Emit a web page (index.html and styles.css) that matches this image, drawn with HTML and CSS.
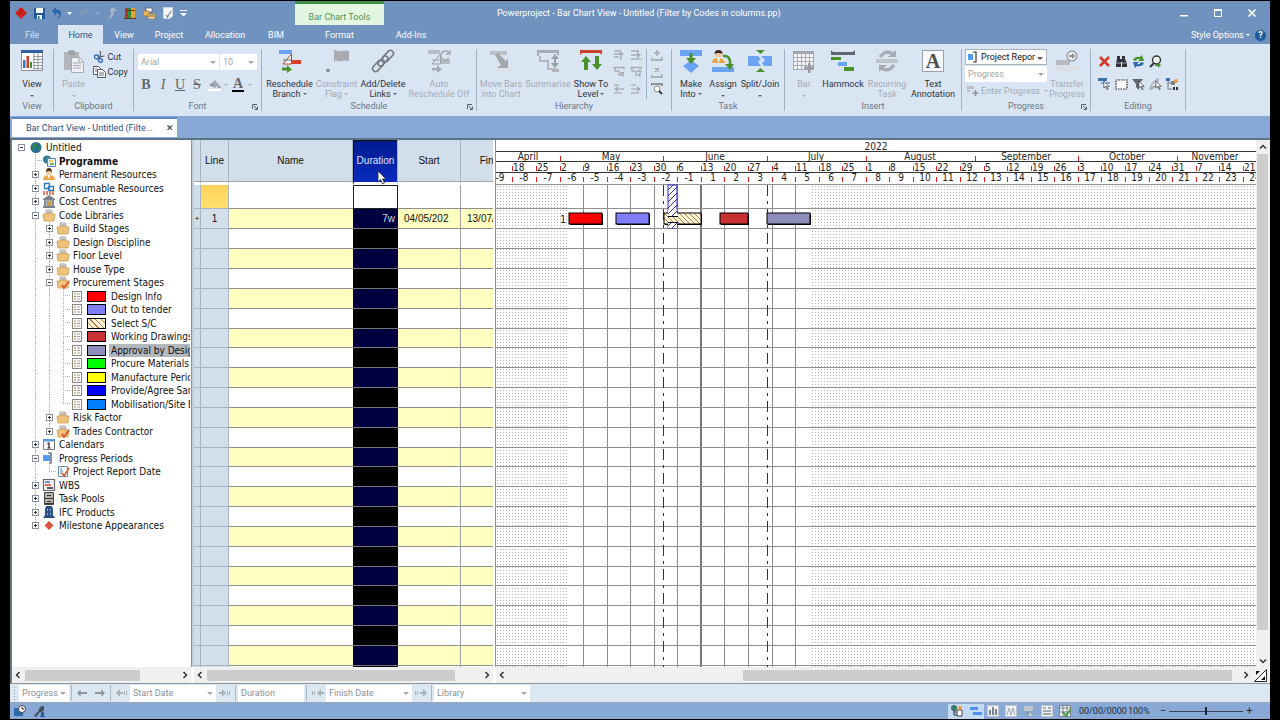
FILE: index.html
```html
<!DOCTYPE html>
<html lang="en">
<head>
<meta charset="utf-8">
<title>Powerproject - Bar Chart View</title>
<link rel="stylesheet" href="styles.css">
</head>
<body>
<svg class="defs" aria-hidden="true">
  <defs>
    <pattern id="hatch-orange" width="5" height="5" patternUnits="userSpaceOnUse"><rect width="5" height="5" fill="#fff6dc"/><path d="M-1 -1L6 6M-1 4L1 6M4 -1L6 1" stroke="#c07a3a" stroke-width="1"/></pattern>
    <pattern id="hatch-blue" width="6" height="6" patternUnits="userSpaceOnUse"><rect width="6" height="6" fill="#fff"/><path d="M-1 7L7 -1M-1 1L1 -1M5 7L7 5" stroke="#2a2ac0" stroke-width="1"/></pattern>
    <pattern id="dots" width="3" height="3" patternUnits="userSpaceOnUse"><rect x="1" y="1" width="1" height="1" fill="#b4b4b4"/></pattern>
    <symbol id="folder" viewBox="0 0 14 13"><path d="M4 1h5l1 1v5H4z" fill="#fff" stroke="#777" stroke-width=".7"/><path d="M6 2v3M8 2v3" stroke="#555" stroke-width=".8"/><path d="M1 5h3l1-1h4l1 1h3v1l-1 6H2z" fill="#eec27a" stroke="#c4924a" stroke-width=".7"/></symbol>
    <symbol id="folder-tick" viewBox="0 0 14 13"><use href="#folder"/><path d="M6 9l2 3 5-7" fill="none" stroke="#d8502c" stroke-width="1.6"/></symbol>
    <symbol id="doc" viewBox="0 0 14 13"><rect x="2.500" y="1.500" width="9" height="10" fill="#fff" stroke="#888"/><path d="M4 4h2M4 6.500h2M4 9h2" stroke="#b08a3a" stroke-width="1.200"/><path d="M7 4h3M7 6.500h3M7 9h3" stroke="#888" stroke-width=".8"/></symbol>
    <symbol id="launch" viewBox="0 0 6 6"><path d="M.5 5V.5H5" fill="none" stroke="#55606e"/><path d="M2 2l3 3M5.500 2.500v3h-3" fill="none" stroke="#55606e"/></symbol>
    <symbol id="arr-l" viewBox="0 0 12 8"><path d="M0 4l4-4v3h7v2H4v3z"/></symbol>
    <symbol id="arr-r" viewBox="0 0 12 8"><path d="M12 4L8 0v3H1v2h7v3z"/></symbol>
    <symbol id="chev-l" viewBox="0 0 6 8"><path d="M4.500 1L1.500 4l3 3" fill="none" stroke="#333" stroke-width="1.500"/></symbol>
    <symbol id="chev-r" viewBox="0 0 6 8"><path d="M1.500 1l3 3-3 3" fill="none" stroke="#333" stroke-width="1.500"/></symbol>
    <symbol id="pointer" viewBox="0 0 8 11"><path d="M1 0v8l2-2 2 4 1-1-2-3h3z" fill="#fff" stroke="#333" stroke-width=".8"/></symbol>
  </defs>
</svg>

<div class="app">
  <header class="titlebar">
    <div class="quick">
      <svg width="12" height="12" viewBox="0 0 12 12"><path d="M6 0l6 6-6 6-6-6z" fill="#d8201c"/><path d="M3 3l6 6M9 3L3 9M4.500 1.500l6 6M7.500 1.500l-6 6" stroke="#a01814" stroke-width=".7"/></svg>
      <button aria-label="Save"><svg width="11" height="11" viewBox="0 0 11 11"><path d="M0 0h11v11H0z" fill="#1f5a9c"/><path d="M2 0h7v5H2zM3 7h5v4H3z" fill="#fff"/><path d="M4 8h1.500v3H4z" fill="#1f5a9c"/></svg></button>
      <button aria-label="Undo"><svg width="20" height="12" viewBox="0 0 20 12"><path d="M0 4l4-4v3q5-1 5 4 0 3-4 5 3-3 2-5-1-1-3-1v3z" fill="#2c64b0"/><path d="M15 5h5l-2.500 3z" fill="#fff"/></svg></button>
      <button aria-label="Redo"><svg width="21" height="12" viewBox="0 0 21 12"><path d="M10 4L6 1v2Q1 3 1 7q0 2 3 4-2-3-1-5 1-1 3-1v2z" fill="#8398b4"/><path d="M16 5h5l-2.500 3z" fill="#8fa6c4"/></svg></button>
      <button aria-label="Up"><svg width="10" height="12" viewBox="0 0 10 12"><path d="M6 0l4 4H7q0 6-6 8 3-3 3-8H2z" fill="#a9b5c6"/></svg></button>
      <button aria-label="Library"><svg width="12" height="12" viewBox="0 0 12 12"><path d="M1 1h3v10H1z" fill="#c23222"/><path d="M4 1h3v10H4z" fill="#2e8a3c"/><path d="M7 1h4v10H7z" fill="#e8a32c"/><path d="M0 11h12v1H0zM1 3h10v1H1z" fill="#5a3a22"/></svg></button>
      <button aria-label="Folders"><svg width="13" height="12" viewBox="0 0 13 12"><path d="M3 1h6v4H3z" fill="#fff" stroke="#555" stroke-width=".7"/><path d="M0 4h6l1 5H1z" fill="#eab75a" stroke="#94702c" stroke-width=".6"/><path d="M5 7h7v5H5z" fill="#f7dca0" stroke="#94702c" stroke-width=".8"/><path d="M6 9h5" stroke="#333" stroke-width=".8"/></svg></button>
      <button aria-label="Check"><svg width="10" height="12" viewBox="0 0 10 12"><path d="M.5.500h9V9L7 11.500H.5z" fill="#f4f6f8" stroke="#ccd2da"/><path d="M3 8l1.500 2L8 4" fill="none" stroke="#8b8f96" stroke-width="1.300"/></svg></button>
      <button aria-label="Customise toolbar"><svg width="7" height="7" viewBox="0 0 7 7"><path d="M0 0h7v1H0zM0 3h7L3.500 6.500z" fill="#fff"/></svg></button>
    </div>
    <div class="context">Bar Chart Tools</div>
    <h1>Powerproject - Bar Chart View - Untitled (Filter by Codes in columns.pp)</h1>
    <div class="winbtns">
      <button aria-label="Minimise"><svg width="10" height="10" viewBox="0 0 10 10"><path d="M1 7h8v1.500H1z" fill="#fff"/></svg></button>
      <button aria-label="Maximise"><svg width="10" height="10" viewBox="0 0 10 10"><path d="M1.500 2v6.500h7V2" fill="none" stroke="#fff"/><path d="M1 1h8v2H1z" fill="#fff"/></svg></button>
      <button aria-label="Close"><svg width="10" height="10" viewBox="0 0 10 10"><path d="M1.500 1.500l7 7M8.500 1.500l-7 7" stroke="#fff" stroke-width="1.600"/></svg></button>
    </div>
  </header>

  <nav class="tabs">
    <button class="file">File</button><button class="active">Home</button><button>View</button><button>Project</button><button>Allocation</button><button>BIM</button><button>Format</button><button>Add-Ins</button>
    <div class="tabs-end"><button>Style Options <i class="caret"></i></button><button class="help" aria-label="Help">?</button></div>
  </nav>

  <div class="ribbon">
    <section class="group g-view"><div class="tools">
      <button class="big"><svg width="24" height="24" viewBox="0 0 24 24"><path d="M1.500 2.500h21v19h-21z" fill="#fff" stroke="#8a8f96"/><path d="M1 1h22v3H1z" fill="#31629f"/><path d="M14 4v17M18 4v17M13 7.500h9M13 10.500h9M13 13.500h9M13 16.500h9M13 19.500h9" stroke="#8a8f96" stroke-width=".9"/><path d="M3 11h2.500v8H3z" fill="#3477c8"/><path d="M6.500 7H9v12H6.500z" fill="#c9402c"/><path d="M10 13h2v6h-2z" fill="#45912c"/></svg><span>View</span><i class="caret"></i></button>
    </div><h2>View</h2></section>

    <section class="group g-clip"><div class="tools">
      <button class="big" disabled><svg width="24" height="24" viewBox="0 0 24 24"><path d="M2 3h15v18H2z" fill="#b3b7bd"/><path d="M6 3q0-2 3.500-2T13 3v3H6z" fill="#9ea2a8"/><path d="M9.500 8.500h8l4 4v11h-12z" fill="#eef0f3" stroke="#a6aab0"/><path d="M17 8v5h4M11 14h8M11 16.500h8M11 19h8" fill="none" stroke="#a6aab0"/></svg><span>Paste</span><i class="caret"></i></button>
      <div class="stack">
        <button class="row"><svg width="12" height="12" viewBox="0 0 12 12"><circle cx="3" cy="6" r="2" fill="none" stroke="#2f66ae" stroke-width="1.300"/><circle cx="7" cy="9.500" r="1.900" fill="none" stroke="#2f66ae" stroke-width="1.300"/><path d="M5 6l6-1M6.500 7.500L7 0" stroke="#555b64" stroke-width="1.200"/></svg>Cut</button>
        <button class="row"><svg width="13" height="12" viewBox="0 0 13 12"><path d="M.5.500h5l2 2v6h-7z" fill="#fff" stroke="#555b64"/><path d="M4.500 3.500h5l3 3v5h-8z" fill="#fff" stroke="#555b64"/><path d="M2 3h2M2 5h2M6 7h5M6 9h5" stroke="#555b64" stroke-width=".9"/></svg>Copy</button>
      </div>
    </div><h2>Clipboard</h2></section>

    <section class="group g-font"><div class="tools">
      <div class="fontrow">
        <label class="combo"><select aria-label="Font" disabled><option>Arial</option></select></label>
        <label class="combo"><select aria-label="Size" disabled><option>10</option></select></label>
      </div>
      <div class="fmt">
        <button class="b" aria-label="Bold">B</button><button class="i" aria-label="Italic">I</button><button class="u" aria-label="Underline">U</button><button class="s" aria-label="Strikethrough">S</button>
        <button aria-label="Fill"><svg width="13" height="13" viewBox="0 0 13 13"><path d="M2 6l5-5 4 5-4 3z" fill="#a4a8ae"/><path d="M1 6l4-2v4zM10 5l3 4h-3z" fill="#8d9197"/><path d="M0 10h13v2H0z" fill="#fff"/></svg></button><i class="caret dim"></i>
        <button class="a" aria-label="Text colour">A</button><i class="caret dim"></i>
      </div>
    </div><h2>Font</h2><svg class="launch" width="6" height="6"><use href="#launch"/></svg></section>

    <section class="group g-sched"><div class="tools">
      <button class="big"><svg width="24" height="24" viewBox="0 0 24 24"><path d="M1 1h13v4H1z" fill="#6ba4f5"/><path d="M14 11h9v4h-9z" fill="#d5412b"/><path d="M13.500 5v10H5z" fill="#fff" stroke="#c43b2a"/><path d="M5 11h9" stroke="#666"/><path d="M4 18.500h5V16l5 4.500-5 3.500v-2.500H4z" fill="#4b912b"/></svg><span>Reschedule<br>Branch<i class="caret"></i></span></button>
      <button class="big" disabled><svg width="24" height="24" viewBox="0 0 24 24"><path d="M9 1h1v12H9zM10 1q4 2 7 1t7 0v10q-4-1-7 0t-7-1z" fill="#a7abb1"/><circle cx="3" cy="21.500" r="2" fill="#8e949c"/></svg><span>Constraint<br>Flag<i class="caret"></i></span></button>
      <button class="big"><svg width="24" height="24" viewBox="0 0 24 24"><g fill="none" stroke="#74797f" stroke-width="1.600"><rect x="-3" y="-6.500" width="6" height="13" rx="3" transform="translate(17 7) rotate(43)"/><rect x="-3" y="-6.500" width="6" height="13" rx="3" transform="translate(7 17) rotate(43)"/><rect x="-2.500" y="-6" width="5" height="12" rx="2.500" transform="translate(12 12) rotate(43)"/></g></svg><span>Add/Delete<br>Links<i class="caret"></i></span></button>
      <button class="big" disabled><svg width="24" height="24" viewBox="0 0 24 24"><path d="M1 1h12v4H1zM14 11h9v4h-9z" fill="#b8bcc2"/><path d="M13.500 5v10H5zM5 11h9" fill="none" stroke="#9a9fa5"/><path d="M22 4a4.500 4.500 0 1 0 0 5M23 1v4h-4" fill="none" stroke="#a2a7ad" stroke-width="1.400"/><path d="M5 19h5v-3l5 4.500-5 3.500v-2.500H5z" fill="#a7abb1"/></svg><span>Auto<br>Reschedule Off</span></button>
    </div><h2>Schedule</h2><svg class="launch" width="6" height="6"><use href="#launch"/></svg></section>

    <section class="group g-hier"><div class="tools">
      <button class="big" disabled><svg width="24" height="24" viewBox="0 0 24 24"><path d="M1 2h17v4H1z" fill="#bcc0c6"/><path d="M5 20h18v3H5z" fill="#dfe2e6"/><path d="M6 6l3-2 8 8 2-3v10H8l4-3z" fill="#a3a7ad"/></svg><span>Move Bars<br>into Chart</span></button>
      <button class="big" disabled><svg width="24" height="24" viewBox="0 0 24 24"><path d="M1 1h22v5h-2V4H3v3H1z" fill="#a9adb3"/><path d="M4 7v5h8v8h8" fill="none" stroke="#b3b7bd" stroke-width="2"/><path d="M16 20h7v3h-7z" fill="#b3b7bd"/><path d="M19 5l4 5h-3v4h3l-4 5-4-5h3v-4h-3z" fill="#9a9fa5"/></svg><span>Summarise</span></button>
      <button class="big"><svg width="24" height="24" viewBox="0 0 24 24"><path d="M1 1h22v5l-2-2H3L1 6z" fill="#c9402c"/><path d="M7 7l5 6H9v8H5v-8H2zM18 21l-5-6h3V7h4v8h3z" fill="#4b912b"/></svg><span>Show To<br>Level<i class="caret"></i></span></button>
      <div class="mini">
        <svg width="12" height="12" viewBox="0 0 12 12"><path d="M1 2h7M1 5h5M1 8h5M8 11V4" fill="none" stroke="#a9adb3" stroke-width="1.400"/><path d="M8 2l3 4H5z" fill="#a9adb3"/></svg>
        <svg width="12" height="12" viewBox="0 0 12 12"><path d="M1 2h7M1 6h4M1 10h10M8 1v5" fill="none" stroke="#a9adb3" stroke-width="1.400"/><path d="M8 9L5 5h6z" fill="#a9adb3"/></svg>
        <svg width="12" height="12" viewBox="0 0 12 12"><path d="M0 1.500h11v2M2 2v3h4v4h4M10 6v5" fill="none" stroke="#a9adb3" stroke-width="1.300"/><path d="M9 9l-2-3h5z" fill="#a9adb3"/></svg>
        <svg width="12" height="12" viewBox="0 0 12 12"><path d="M0 1.500h11v2M2 2v3h4v4h4M10 6v5" fill="none" stroke="#a9adb3" stroke-width="1.300"/><path d="M9 3l-2 3h5z" fill="#a9adb3"/></svg>
        <svg width="12" height="12" viewBox="0 0 12 12"><path d="M1 2h5M4 6h7M1 10h8" stroke="#b3b7bd" stroke-width="1.500"/><path d="M1 6l4-3v6z" fill="#a9adb3"/></svg>
        <svg width="12" height="12" viewBox="0 0 12 12"><path d="M1 2h5M1 6h7M1 10h8" stroke="#b3b7bd" stroke-width="1.500"/><path d="M11 6L7 3v6z" fill="#a9adb3"/></svg>
      </div>
      <div class="mini single">
        <svg width="12" height="12" viewBox="0 0 12 12"><path d="M0 8v3h11V8M6 1v6M3 4h6" fill="none" stroke="#9ea2a8" stroke-width="1.400"/></svg>
        <svg width="12" height="12" viewBox="0 0 12 12"><path d="M0 8v3h11V8M4 2l4 4M8 2L4 6" fill="none" stroke="#9ea2a8" stroke-width="1.400"/></svg>
        <svg width="12" height="12" viewBox="0 0 12 12"><path d="M0 3V1h11v2" fill="none" stroke="#777" stroke-width="1.300"/><circle cx="6" cy="6" r="3" fill="#fff" stroke="#888"/><path d="M8 8l3 3" stroke="#333" stroke-width="1.800"/></svg>
      </div>
    </div><h2>Hierarchy</h2></section>

    <section class="group g-task"><div class="tools">
      <button class="big"><svg width="24" height="24" viewBox="0 0 24 24"><path d="M1 1h22v6H1zM12 11l8 6-8 7-8-7z" fill="#6ba4f5"/><path d="M10.500 4h3v5H17l-5 6-5-6h3.500z" fill="#4b912b"/></svg><span>Make<br>Into<i class="caret"></i></span></button>
      <button class="big"><svg width="24" height="24" viewBox="0 0 24 24"><path d="M1 18h22v5H1z" fill="#6ba4f5"/><path d="M1 14q0-5 6-5t7 5z" fill="#eda648"/><path d="M6 9h3l-1.500 5z" fill="#fff"/><circle cx="7.500" cy="5" r="3.500" fill="#f2c79a"/><path d="M3.500 5Q3.500 1 7.500 1t4 4q-4-2-8 0z" fill="#3c2a20"/><path d="M12 7q8-1 7 9" fill="none" stroke="#4b912b" stroke-width="2.500"/><path d="M14 15h9l-4 6z" fill="#4b912b"/></svg><span>Assign</span><i class="caret"></i></button>
      <button class="big"><svg width="24" height="24" viewBox="0 0 24 24"><path d="M0 7h10l3 3-3 3 3 4H0zM13 7h11v10h-8l-2-3 3-3z" fill="#6ba4f5"/><path d="M8 1h9l-4.500 4zM8 23h9l-4.500-4z" fill="#4b912b"/></svg><span>Split/Join</span><i class="caret"></i></button>
    </div><h2>Task</h2></section>

    <section class="group g-ins"><div class="tools">
      <button class="big" disabled><svg width="24" height="24" viewBox="0 0 24 24"><path d="M1.500 3.500h20v17h-20z" fill="#f4f5f7" stroke="#a3a7ad"/><path d="M1 2h21v3H1z" fill="#a3a7ad"/><path d="M1 8.500h20M1 12.500h20M1 16.500h20M5.500 4v16M9.500 4v16M13.500 4v16M17.500 4v16" stroke="#a9adb3"/><path d="M16 14h2.500v3.500H22V20h-3.500v4H16v-4h-4v-2.500h4z" fill="#979ba1"/></svg><span>Bar</span><i class="caret"></i></button>
      <button class="big"><svg width="24" height="24" viewBox="0 0 24 24"><path d="M0 1l2 2h20l2-2v5H0z" fill="#62676d"/><path d="M0 8h10v3H0z" fill="#4b912b"/><path d="M7 13h9v4H7z" fill="#6ba4f5"/><path d="M13 18h10v4H13z" fill="#4b912b"/></svg><span>Hammock</span></button>
      <button class="big" disabled><svg width="24" height="24" viewBox="0 0 24 24"><path d="M1 10h22v4H1z" fill="#c0c4ca"/><path d="M5 8q6-8 13-3M19 16q-6 8-13 3" fill="none" stroke="#a7abb1" stroke-width="3"/><path d="M21 1v7h-8zM4 23v-7h8z" fill="#a7abb1"/></svg><span>Recurring<br>Task</span></button>
      <button class="big"><span class="glyph">A</span><span>Text<br>Annotation</span></button>
    </div><h2>Insert</h2></section>

    <section class="group g-prog"><div class="tools">
      <div class="stack">
        <label class="combo on"><svg width="10" height="12" viewBox="0 0 10 12"><path d="M0 3h5v6H0z" fill="#4f9cf0"/><path d="M5 1h3v10H5" fill="none" stroke="#333" stroke-width="1.200"/></svg><select aria-label="Progress period"><option>Project Repor</option></select></label>
        <label class="combo"><select aria-label="Progress type" disabled><option>Progress</option></select></label>
        <button class="row" disabled><svg width="12" height="12" viewBox="0 0 12 12"><path d="M0 1h7v3H0zM0 5h3v2H0z" fill="#b9bdc3"/><path d="M8.500 5v6M5.500 8h6" stroke="#8e9298" stroke-width="1.600"/></svg>Enter Progress<i class="caret"></i></button>
      </div>
      <button class="big" disabled><svg width="24" height="24" viewBox="0 0 24 24"><path d="M1 11h14v5H1z" fill="#b7bbc1"/><path d="M1 17h22v5H1z" fill="#dcdfe4"/><circle cx="17" cy="7" r="5" fill="#e9ecf0" stroke="#9a9fa5" stroke-width="1.500"/><path d="M14 6h3V4l3.500 3L17 10V8h-3z" fill="#8e9298"/></svg><span>Transfer<br>Progress</span></button>
    </div><h2>Progress</h2><svg class="launch" width="6" height="6"><use href="#launch"/></svg></section>

    <section class="group g-edit"><div class="tools">
      <svg width="13" height="13" viewBox="0 0 13 13"><path d="M2 2l9 9M11 2l-9 9" stroke="#d33a26" stroke-width="2.600"/></svg>
      <svg width="13" height="13" viewBox="0 0 13 13"><path d="M2 1h3v3h2V1h3v3l2 4v4H7V7H6v5H1V8l1-4z" fill="#30343a"/><path d="M1 8h5M7 8h5" stroke="#9aa0a8"/></svg>
      <svg width="13" height="13" viewBox="0 0 13 13"><path d="M1 5q2-4 7-3l2-2 2 6H6l2-2q-3-1-4 2z" fill="#4b912b"/><path d="M12 8q-2 4-7 3l-2 2-2-6h6L5 9q3 1 4-2z" fill="#2f66ae"/></svg>
      <svg width="13" height="13" viewBox="0 0 13 13"><circle cx="7.500" cy="5" r="4" fill="#eef4ee" stroke="#30343a" stroke-width="1.400"/><path d="M5 8l-4 4" stroke="#30343a" stroke-width="2"/><path d="M6 9h3V7l3 3-3 3v-2H6z" fill="#4b912b"/></svg>
      <span></span>
      <svg width="13" height="13" viewBox="0 0 13 13"><path d="M0 0h9v3H0z" fill="#3a6fb0"/><path d="M3 4h9v2H3z" fill="#7fa6d6"/><use href="#pointer" x="5" y="3" width="7" height="10"/></svg>
      <svg width="13" height="13" viewBox="0 0 13 13"><rect x="1" y="2" width="11" height="9" fill="#fff" stroke="#222" stroke-width="1.200" stroke-dasharray="1.500 1"/></svg>
      <svg width="13" height="13" viewBox="0 0 13 13"><path d="M0 1h11L7 6v6L4 9V6z" fill="#62676d"/><use href="#pointer" x="6" y="3" width="7" height="10"/></svg>
      <svg width="13" height="13" viewBox="0 0 13 13"><path d="M1 11Q2 5 9 1q0 6-6 10M1 12l4-4" fill="none" stroke="#a3a7ad" stroke-width="1.300"/><use href="#pointer" x="6" y="3" width="7" height="10"/></svg>
      <svg width="13" height="13" viewBox="0 0 13 13"><path d="M2 0v11h4M2 5h4" fill="none" stroke="#777"/><path d="M0 0h4v3H0z" fill="#3a6fb0"/><path d="M5 3h4v4H5z" fill="#7c8087"/><circle cx="10" cy="3" r="2" fill="#e6984a"/><path d="M7 9h2v3H7zM10 9h2v3h-2z" fill="#30343a"/></svg>
    </div><h2>Editing</h2></section>
  </div>

  <div class="doctabs"><div class="doctab"><span>Bar Chart View - Untitled (Filte...</span><button aria-label="Close view">✕</button></div></div>

  <main class="work">
    <aside class="pane tree-pane">
      <ul class="tree">
        <li><b class="ex minus"></b><svg class="ic"><circle cx="7" cy="6.500" r="5.500" fill="#2b6d8e"/><path d="M4 3q3-2 4 0t-2 4-3 2zM9 6l3 1-2 4z" fill="#2f8a52"/></svg>Untitled</li>
        <li><i class="v tee"></i><svg class="ic"><circle cx="5" cy="4.500" r="4" fill="#3b7f96"/><path d="M5.500 3.500h8v8h-8z" fill="#dff0ff" stroke="#5a86b0"/><path d="M7 5h4v2H7z" fill="#e8d24a"/><path d="M8 8h4v2H8z" fill="#7db65a"/></svg><strong>Programme</strong></li>
        <li><i class="v"><b class="ex"></b></i><svg class="ic"><circle cx="7" cy="4" r="3" fill="#f2c79a"/><path d="M4 4q0-4 3-4t3 4q-3-2-6 0z" fill="#4a3424"/><path d="M1 12q0-5 6-5t6 5z" fill="#eda648"/><path d="M5.500 7h3L7 11z" fill="#fff"/></svg>Permanent Resources</li>
        <li><i class="v"><b class="ex"></b></i><svg class="ic"><path d="M2.500 1.500h5v5h-5zM6.500 4.500h5v4h-5z" fill="#fff" stroke="#2f78c8" stroke-width="1.300"/><path d="M1 10h12M1 12h12" stroke="#d0583c" stroke-width="1.400" stroke-dasharray="2 1"/></svg>Consumable Resources</li>
        <li><i class="v"><b class="ex"></b></i><svg class="ic"><path d="M1 4l6-4 6 4v1H1zM1 11h12v2H1z" fill="#77828e"/><path d="M2 5h10v6H2z" fill="#a8b2bc"/><path d="M3 5v6M11 5v6" stroke="#66707a"/><path d="M5 6h4v5H5z" fill="#c89a4a"/></svg>Cost Centres</li>
        <li><i class="v"><b class="ex minus"></b></i><svg class="ic"><use href="#folder"/></svg>Code Libraries</li>
        <li><i class="v"></i><i class="v"><b class="ex"></b></i><svg class="ic"><use href="#folder"/></svg>Build Stages</li>
        <li><i class="v"></i><i class="v"><b class="ex"></b></i><svg class="ic"><use href="#folder"/></svg>Design Discipline</li>
        <li><i class="v"></i><i class="v"><b class="ex"></b></i><svg class="ic"><use href="#folder"/></svg>Floor Level</li>
        <li><i class="v"></i><i class="v"><b class="ex"></b></i><svg class="ic"><use href="#folder"/></svg>House Type</li>
        <li><i class="v"></i><i class="v"><b class="ex minus"></b></i><svg class="ic"><use href="#folder-tick"/></svg>Procurement Stages</li>
        <li><i class="v"></i><i class="v"></i><i class="v tee"></i><svg class="ic"><use href="#doc"/></svg><em class="sw red"></em><span>Design Info</span></li>
        <li><i class="v"></i><i class="v"></i><i class="v tee"></i><svg class="ic"><use href="#doc"/></svg><em class="sw periwinkle"></em><span>Out to tender</span></li>
        <li><i class="v"></i><i class="v"></i><i class="v tee"></i><svg class="ic"><use href="#doc"/></svg><em class="sw hatch"></em><span>Select S/C</span></li>
        <li><i class="v"></i><i class="v"></i><i class="v tee"></i><svg class="ic"><use href="#doc"/></svg><em class="sw brick"></em><span>Working Drawings</span></li>
        <li><i class="v"></i><i class="v"></i><i class="v tee"></i><svg class="ic"><use href="#doc"/></svg><em class="sw slate"></em><span class="sel">Approval by Design Team</span></li>
        <li><i class="v"></i><i class="v"></i><i class="v tee"></i><svg class="ic"><use href="#doc"/></svg><em class="sw green"></em><span>Procure Materials</span></li>
        <li><i class="v"></i><i class="v"></i><i class="v tee"></i><svg class="ic"><use href="#doc"/></svg><em class="sw yellow"></em><span>Manufacture Period</span></li>
        <li><i class="v"></i><i class="v"></i><i class="v tee"></i><svg class="ic"><use href="#doc"/></svg><em class="sw blue"></em><span>Provide/Agree Samples</span></li>
        <li><i class="v"></i><i class="v"></i><i class="v tee last"></i><svg class="ic"><use href="#doc"/></svg><em class="sw azure"></em><span>Mobilisation/Site Establishment</span></li>
        <li><i class="v"></i><i class="v"><b class="ex"></b></i><svg class="ic"><use href="#folder"/></svg>Risk Factor</li>
        <li><i class="v"></i><i class="v last"><b class="ex"></b></i><svg class="ic"><use href="#folder-tick"/></svg>Trades Contractor</li>
        <li><i class="v"><b class="ex"></b></i><svg class="ic"><path d="M1.500 1.500h11v10h-11z" fill="#fff" stroke="#777"/><path d="M1 1h12v2.500H1z" fill="#5a9ad8"/><path d="M5.500 6L7 5v5M5.500 10h3" fill="none" stroke="#222" stroke-width="1.200"/></svg>Calendars</li>
        <li><i class="v"><b class="ex minus"></b></i><svg class="ic"><path d="M1 3h7v6H1z" fill="#4f9cf0"/><path d="M6 1h3v10H7" fill="none" stroke="#445" stroke-width="1.200"/></svg>Progress Periods</li>
        <li><i class="v"></i><i class="v tee last"></i><svg class="ic"><path d="M2.500 1.500h9v10h-9z" fill="#fff" stroke="#6a8ab0"/><path d="M4 4h2M4 6h3M4 8h2" stroke="#3a7fc8"/><path d="M6 8l2 3 5-8" fill="none" stroke="#d8502c" stroke-width="1.500"/></svg>Project Report Date</li>
        <li><i class="v"><b class="ex"></b></i><svg class="ic"><path d="M1.500.5h11v11h-11z" fill="#f2f2f4" stroke="#666" stroke-width="1.200"/><path d="M3 3h5" stroke="#3a7fc8" stroke-width="1.600"/><path d="M3 6h6" stroke="#d8502c" stroke-width="1.600"/><path d="M5 9h6" stroke="#333" stroke-width="1.600"/></svg>WBS</li>
        <li><i class="v"><b class="ex"></b></i><svg class="ic"><path d="M2.500.5h9v12h-9z" fill="#b8b4aa" stroke="#444"/><path d="M3 6.500h8M5 3.500h4M5 9.500h4" stroke="#333"/><path d="M3 11h8v1H3z" fill="#333"/></svg>Task Pools</li>
        <li><i class="v"><b class="ex"></b></i><svg class="ic"><path d="M4 0h6l1 3v6l2 3H1l2-3V3z" fill="#2b4f86"/><path d="M5 3h1v2H5zM8 3h1v2H8zM5 7h1v2H5zM8 7h1v2H8z" fill="#8fb4e4"/></svg>IFC Products</li>
        <li><i class="v last"><b class="ex"></b></i><svg class="ic"><path d="M7 2l4.500 4.500L7 11 2.500 6.500z" fill="#d9513a"/></svg>Milestone Appearances</li>
      </ul>
      <div class="hscroll"><svg width="6" height="8"><use href="#chev-l"/></svg><div class="track t-tree"><i></i></div><svg width="6" height="8"><use href="#chev-r"/></svg></div>
    </aside>
    <div class="splitter"></div>
    <section class="pane">
      <div class="sheet">
        <table>
          <colgroup><col class="c-mark"><col class="c-line"><col class="c-name"><col class="c-dur"><col class="c-start"><col class="c-fin"></colgroup>
          <thead><tr><th></th><th>Line</th><th>Name</th><th class="dur">Duration<svg class="mouse" width="10" height="15" viewBox="0 0 10 15"><path d="M1 1v11l2.500-2.500L5.500 14l2-1-2-4H9z" fill="#fff" stroke="#222" stroke-width=".8"/></svg></th><th>Start</th><th>Finish</th></tr></thead>
          <tbody id="rows">
            <tr class="entry"><td></td><td></td><td></td><td></td><td></td><td></td></tr>
            <tr><td>+</td><td>1</td><td></td><td>7w</td><td>04/05/202</td><td>13/07/2022</td></tr>
          </tbody>
        </table>
      </div>
      <div class="hscroll"><svg width="6" height="8"><use href="#chev-l"/></svg><div class="track t-sheet"><i></i></div><svg width="6" height="8"><use href="#chev-r"/></svg></div>
    </section>
    <div class="splitter light"></div>
    <section class="pane chart-pane">
      <div class="chart-wrap">
        <svg id="gantt" class="gantt" role="img" aria-label="Bar chart"></svg>
        <div class="vscroll"><svg width="8" height="6" viewBox="0 0 8 6"><path d="M1 4.500l3-3 3 3" fill="none" stroke="#333" stroke-width="1.500"/></svg><div class="vtrack"><i></i></div><svg width="8" height="6" viewBox="0 0 8 6"><path d="M1 1.500l3 3 3-3" fill="none" stroke="#333" stroke-width="1.500"/></svg></div>
      </div>
      <div class="hscroll"><svg width="6" height="8"><use href="#chev-l"/></svg><div class="track t-chart"><i></i></div><svg width="6" height="8"><use href="#chev-r"/></svg><svg class="corner" width="13" height="13" viewBox="0 0 13 13"><path d="M.5 12.500L12.500.5v12z" fill="#fff" stroke="#222"/><path d="M2 2h4L2 6zM11 11H7l4-4z" fill="#111"/></svg></div>
    </section>
  </main>

  <div class="editbar">
    <i class="grip"></i>
    <label class="combo w50"><select aria-label="Progress mode" disabled><option>Progress</option></select></label><hr>
    <button aria-label="Previous"><svg width="11" height="8" fill="#8f969e"><use href="#arr-l"/></svg></button><button aria-label="Next"><svg width="11" height="8" fill="#8f969e"><use href="#arr-r"/></svg></button><hr>
    <svg class="nudge" width="12" height="8" viewBox="0 0 12 8" fill="#a8b0b8"><path d="M0 4l4-4v3h3v2H4v3zM8 2h1v4H8zM10 2h1v4h-1z"/></svg>
    <label class="combo w86"><select aria-label="Start date" disabled><option>Start Date</option></select></label>
    <svg class="nudge" width="12" height="8" viewBox="0 0 12 8" fill="#a8b0b8"><path d="M7 4L3 0v3H0v2h3v3zM8 2h1v4H8zM10 2h1v4h-1z"/></svg><hr>
    <input class="w66" aria-label="Duration" value="Duration" disabled><hr>
    <svg class="nudge" width="12" height="8" viewBox="0 0 12 8" fill="#a8b0b8"><path d="M5 4l4-4v3h3v2H9v3zM0 2h1v4H0zM2 2h1v4H2z"/></svg>
    <label class="combo w86"><select aria-label="Finish date" disabled><option>Finish Date</option></select></label>
    <svg class="nudge" width="12" height="8" viewBox="0 0 12 8" fill="#a8b0b8"><path d="M12 4L8 0v3H5v2h3v3zM0 2h1v4H0zM2 2h1v4H2z"/></svg><hr>
    <label class="combo w96"><select aria-label="Library" disabled><option>Library</option></select></label>
  </div>

  <footer class="status">
    <div class="left">
      <svg width="13" height="12" viewBox="0 0 13 12"><path d="M1 3h9v8H1z" fill="#2c6aa8"/><circle cx="9" cy="4" r="3.500" fill="#fff" stroke="#445"/><path d="M9 2v2h2" fill="none" stroke="#222"/></svg>
      <svg width="13" height="12" viewBox="0 0 13 12"><path d="M1 11l5-6q0-4 5-4v4q-2 3-4 2l-4 5z" fill="#454e5a"/><path d="M8 7h3v4h1v1H7v-1h1z" fill="#2c5a9c"/></svg>
    </div>
    <div class="views">
      <span class="on"><svg width="13" height="12" viewBox="0 0 13 12"><circle cx="3" cy="3" r="3" fill="#3a7a6a"/><path d="M3 5v5h4M3 7h4" fill="none" stroke="#333"/><path d="M6 5h5v6H6z" fill="#fff" stroke="#444"/><circle cx="9" cy="3" r="2" fill="#e6984a"/></svg></span>
      <span class="on"><svg width="13" height="12" viewBox="0 0 13 12"><path d="M1 2h8v3H1zM4 7h9v3H4z" fill="#4f90f0"/></svg></span>
      <span><svg width="12" height="12" viewBox="0 0 12 12"><path d="M.5.500h11v11H.5z" fill="#eef2f6" stroke="#c0c6ce"/><path d="M2 5h2v5H2zM5 2h2v8H5zM8 4h2v6H8z" fill="#7c838c"/></svg></span>
      <span><svg width="12" height="12" viewBox="0 0 12 12"><path d="M.5.500h11v11H.5z" fill="#eef2f6" stroke="#c0c6ce"/><path d="M2 10l2-7 2 7 2-7 2 7" fill="none" stroke="#a3a9b0"/></svg></span>
      <span><svg width="12" height="12" viewBox="0 0 12 12"><path d="M1 1h9v5H1zM6 6l4 5H5z" fill="#c0c6ce"/><path d="M3 6l4 1-3 4z" fill="#8a929c"/></svg></span>
      <span><svg width="12" height="12" viewBox="0 0 12 12"><path d="M.5.500h11v11H.5z" fill="#eef2f6" stroke="#c0c6ce"/><path d="M2 3h3M2 6h8M2 9h8M7 3h3" stroke="#8a929c" stroke-width="1.300"/></svg></span>
      <span><svg width="12" height="12" viewBox="0 0 12 12"><path d="M.5.500h11v11H.5z" fill="#f2f5f7" stroke="#7c838c"/><path d="M0 3h12M4 1v10M8 1v10M0 7h12" stroke="#7c838c"/><path d="M4 7l3 4 5-7" fill="none" stroke="#3d9a3a" stroke-width="1.800"/></svg></span>
    </div>
    <span class="date">00/00/0000</span><span class="pct">100%</span>
    <div class="zoom"><span>−</span><input type="range" aria-label="Zoom" min="0" max="200" value="100"><span>+</span></div>
  </footer>
</div>
<script src="script.js"></script>
</body>
</html>
```

FILE: styles.css
```css
:root {
  --ui: Roboto, "Open Sans", sans-serif;
  --tahoma: "DejaVu Sans Condensed", "DejaVu Sans", sans-serif;
  --arial: "Liberation Sans", Arial, sans-serif;
  --ink: #2b3440;
  --dim: #a3abb6;
  --line: #a3b1c2;
}
* { box-sizing: border-box; }
body { margin: 0; padding: 1px 10px; background: #000; font: 9px/10px var(--ui); color: var(--ink); }
button, select, input { font: inherit; color: inherit; border: 0; padding: 0; margin: 0; background: none; border-radius: 0; }
h1, h2 { font: inherit; margin: 0; }
svg { display: block; flex: none; }
.defs { position: absolute; width: 0; height: 0; }
.app { display: flex; flex-direction: column; height: calc(100vh - 2px); min-height: 480px; background: #7092be; overflow: hidden; }
.caret { display: inline-block; border: 2px solid transparent; border-top-color: #5a6470; border-bottom: 0; margin-left: 2px; vertical-align: 2px; }
.caret.dim, :disabled .caret { border-top-color: #a9b1bb; }

/* title bar */
.titlebar { display: grid; grid-template-columns: 285px 89px 1fr 110px; height: 24px; align-items: center; color: #fff; }
.quick { display: flex; align-items: center; gap: 7px; padding-left: 5px; }
.context { height: 24px; background: #e3f6e2; color: #4f9455; border-top: 3px solid #3f8f46; text-align: center; line-height: 27px; }
.titlebar h1 { padding-left: 113px; white-space: nowrap; }
.winbtns { display: flex; gap: 24px; justify-content: flex-end; padding-right: 13px; }

/* ribbon tabs */
.tabs { display: grid; grid-template-columns: 48px 45px 42px 48px 64px 38px 89px 54px 1fr; height: 19px; color: #fff; }
.tabs > button { line-height: 20px; }
.tabs .file { color: #d7e3f2; padding-right: 4px; }
.tabs .active { background: #dae5f3; color: #2b4f86; }
.tabs-end { display: flex; justify-content: flex-end; align-items: center; gap: 5px; padding-right: 4px; }
.tabs-end .caret { border-top-color: #fff; margin-left: 0; }
.help { width: 11px; height: 11px; border-radius: 50%; background: #1f5a9c; font-weight: bold; }

/* ribbon */
.ribbon { display: flex; height: 72px; background: #dae5f3; padding: 5px 0 0 1px; }
.group { position: relative; display: flex; flex-direction: column; height: 62px; border-right: 1px solid var(--line); }
.group .tools { height: 52px; display: grid; align-content: start; justify-content: center; }
.group h2 { text-align: center; color: #6b7684; }
.launch { position: absolute; right: 3px; bottom: 1px; }
.g-view { width: 43px; }
.g-clip { width: 80px; } .g-clip .tools { grid-template-columns: 38px 40px; }
.g-font { width: 128px; }
.g-sched { width: 215px; } .g-sched .tools { grid-template-columns: 47px 47px 46px 66px; }
.g-hier { width: 195px; } .g-hier .tools { grid-template-columns: 44px 50px 36px 38px 22px; }
.g-task { width: 113px; } .g-task .tools { grid-template-columns: 34px 30px 44px; }
.g-ins { width: 177px; } .g-ins .tools { grid-template-columns: 32px 46px 42px 50px; }
.g-prog { width: 129px; } .g-prog .tools { grid-template-columns: 82px 40px; }
.g-edit { width: 95px; } .g-edit .tools { grid-template-columns: repeat(5, 17px); gap: 10px 0; padding-top: 6px; justify-items: center; }
.big { display: flex; flex-direction: column; align-items: center; white-space: nowrap; }
.big > svg { margin-bottom: 6px; }
.big > .caret { margin: 6px 0 0; }
.big:disabled, .row:disabled { color: var(--dim); }
.glyph { width: 22px; height: 22px; margin: 1px 0 7px; border: 1px solid #9aa1aa; background: #f6f8fa; font: bold 20px/20px "Liberation Serif", serif; color: #4a4f55; }
.stack { display: flex; flex-direction: column; }
.row { display: flex; align-items: center; gap: 2px; height: 15px; white-space: nowrap; }
.g-clip .row svg { width: 13px; }

.combo { display: flex; align-items: center; position: relative; background: #fff; height: 16px; color: #a3a3a3; }
.combo select { appearance: none; width: 100%; height: 100%; padding-left: 3px; opacity: 1; color: inherit; }
.combo::after { content: ""; position: absolute; right: 3px; top: 7px; border: 3px solid transparent; border-top-color: #a8a8a8; border-bottom: 0; pointer-events: none; }
.combo.on { border: 1px solid #aab2bc; color: #111; padding-left: 2px; height: 16px; margin-bottom: 1px; }
.combo.on::after { border-top-color: #555; }
.g-prog .row { padding-left: 2px; height: 18px; }
.fontrow { display: grid; grid-template-columns: 81px 37px; gap: 1px; padding-top: 5px; }
.fmt { display: flex; align-items: center; height: 30px; gap: 5px; padding-left: 2px; font: 14px/16px "Liberation Serif", serif; color: #62676d; }
.fmt button { width: 12px; }
.fmt .caret { margin: 0 -1px; }
.fmt .b { font-weight: bold; } .fmt .i { font-style: italic; } .fmt .u { text-decoration: underline; } .fmt .s { text-decoration: line-through; }
.fmt .a { border-bottom: 2px solid #000; line-height: 12px; font-weight: bold; }
.mini { display: grid; grid-template-columns: 12px 12px; gap: 5px; padding: 0 4px; border-right: 1px solid var(--line); height: 50px; align-content: start; }
.mini.single { grid-template-columns: 12px; border: 0; }

/* document tabs */
.doctabs { height: 24px; background: #88a9d7; border-bottom: 2px solid #5d7386; padding: 1px 2px; }
.doctab { display: flex; justify-content: space-between; width: 165px; height: 20px; background: #fff; border-top: 2px solid #5c86c4; padding: 0 3px 0 14px; line-height: 18px; color: #2b4f86; white-space: nowrap; }
.doctab button { color: #223; }

/* work area */
.work { flex: 1; min-height: 0; display: grid; grid-template-columns: 179px 3px 299px 3px 1fr; background: #fff; border-left: 2px solid #6d7780; }
.pane { display: grid; grid-template-rows: minmax(0, 1fr) 16px; grid-template-columns: minmax(0, 1fr); min-width: 0; min-height: 0; }
.splitter { background: #c3ced9; border-left: 1px solid #8a959f; margin-bottom: 16px; }
.splitter.light { background: #fff; border-left: 0; border-right: 1px solid #8a959f; }
.tree { list-style: none; margin: 0; padding: 1px 0 0 2px; overflow: hidden; font: 10px/13px var(--tahoma); color: #111; width: 178px; }
.tree li { display: flex; align-items: center; height: 13px; white-space: nowrap; overflow: hidden; }
.tree li:nth-child(even) { height: 14px; }
.tree strong { font-weight: bold; }
.tree i, .tree > li > .ex { flex: none; }
.tree i:first-child { margin-left: 14px; }
.v { display: flex; align-items: center; justify-content: center; width: 14px; height: 14px; position: relative; background: repeating-linear-gradient(#a9a9a9 0 1px, #fff 1px 2px) 7px 0 / 1px 14px no-repeat; }
.v::after { content: ""; position: absolute; left: 9px; right: 0; top: 6px; border-top: 1px dotted #a9a9a9; display: none; }
.tee::after { display: block; }
.v.last { background-size: 1px 7px; }
.ex { width: 7px; height: 7px; border: 1px solid #8b929b; background: linear-gradient(#333, #333) center / 3px 1px no-repeat, linear-gradient(#333, #333) center / 1px 3px no-repeat, #fff; }
.ex.minus { background: linear-gradient(#333, #333) center / 3px 1px no-repeat, #fff; }
.tree > li > .ex { margin: 0 4px 0 4px; }
.ic { width: 14px; height: 13px; margin-right: 3px; }
.sw { flex: none; width: 19px; height: 11px; border: 1px solid #000; }
.sw + span { margin-left: 3px; padding-left: 2px; height: 13px; }
.sel { background: #b3b8bd; }
.red { background: #f00; } .periwinkle { background: #8080ff; } .brick { background: #c83232; } .slate { background: #8e8ebc; }
.green { background: #0f0; } .yellow { background: #ff0; } .blue { background: #00f; } .azure { background: #0080ff; }
.hatch { background: repeating-linear-gradient(45deg, #fff6dc 0 3px, #c07a3a 3px 4px); }

/* spreadsheet */
.sheet { overflow: hidden; font: 10px/12px var(--arial); color: #111; }
.sheet table { table-layout: fixed; width: 332px; border-collapse: separate; border-spacing: 0; }
.c-mark { width: 7px; } .c-line { width: 28px; } .c-name { width: 124px; } .c-dur { width: 45px; } .c-start { width: 63px; } .c-fin { width: 65px; }
.sheet th { position: relative; height: 45px; padding: 0; font-weight: normal; background: #d2dee9; border-right: 1px solid #a8b4c0; border-bottom: 3px solid #fff; box-shadow: inset 0 -1px #9aa5b0; }
.sheet th.dur { background: linear-gradient(#001a8c, #0a2cc0); color: #dfe6ff; border-left: 1px solid #111; box-shadow: inset 0 1px #111; }
.mouse { position: absolute; left: 23px; top: 30px; z-index: 2; }
.sheet td { height: 20px; padding: 0; overflow: hidden; white-space: nowrap; border-bottom: 1px solid #8f8f8f; background: #fff; }
.sheet tr:nth-child(even) td { background: #ffffc0; }
.sheet tr.entry td { height: 24px; }
.sheet tr.short td { height: 19px; }
.sheet tbody td:nth-child(-n+2) { background: #d2dee9; border-right: 1px solid #a8b4c0; border-bottom-color: #a8b4c0; text-align: center; }
.sheet tbody td:first-child { font-size: 8px; }
.sheet tbody tr.entry td:nth-child(2) { background: linear-gradient(#ffd25a, #ffe070); }
.sheet tbody td:nth-child(4) { background: #000; color: #d8d8ea; text-align: right; padding-right: 3px; border-bottom-color: #777; }
.sheet tbody tr:nth-child(even) td:nth-child(4) { background: #00003f; }
.sheet tbody tr.entry td:nth-child(4) { background: #fff; border: 1px solid #222; }
.sheet tbody td:nth-child(5) { border-right: 1px solid #a0a0a0; }
.sheet tbody td:nth-child(n+5) { padding-left: 6px; }

/* chart */
.chart-wrap { display: grid; grid-template-columns: minmax(0, 1fr) 14px; min-height: 0; }
.gantt { width: 100%; height: 100%; font: 10px var(--tahoma); fill: #222; overflow: hidden; }
.vscroll { display: flex; flex-direction: column; align-items: center; background: #f0f0f0; padding: 4px 2px 3px 1px; }
.vtrack { flex: 1; width: 100%; margin: 4px 0 28px; }
.vtrack i { display: block; height: 100%; background: #cdcdcd; }

.hscroll { display: flex; align-items: center; background: #f0f0f0; padding: 0 3px; gap: 4px; }
.track { flex: 1; height: 11px; }
.track i { display: block; height: 100%; background: #cdcdcd; }
.t-tree i { width: 75%; }
.t-sheet i { width: 91%; }
.t-chart i { width: 67%; margin-left: 32%; }
.corner { margin-left: 1px; }

/* edit bar */
.editbar { display: flex; align-items: center; height: 20px; background: #dce8f1; border-top: 1px solid #8a959f; border-bottom: 1px solid #9aa8b8; padding-left: 3px; color: #8a8f96; }
.editbar hr { width: 1px; height: 16px; margin: 0 2px; border: 0; background: #a9b8c6; }
.editbar button { padding: 0 3px; }
.editbar input { background: #fff; height: 17px; padding-left: 3px; }
.editbar .combo { height: 17px; color: #8a8f96; }
.grip { width: 3px; height: 14px; margin-right: 3px; background: radial-gradient(circle, #97a5b3 1px, transparent 1px) 0 0 / 3px 3px; }
.nudge { margin: 0 2px 0 3px; }
.w50 { width: 50px; } .w86 { width: 86px; } .w66 { width: 66px; } .w96 { width: 96px; }

/* status bar */
.status { display: flex; align-items: center; height: 16px; background: #88a8d6; color: #1f2a3a; }
.left { display: flex; gap: 7px; margin-right: auto; padding-left: 3px; }
.views { display: flex; }
.views span { display: grid; place-items: center; width: 18px; height: 15px; }
.views .on { background: #c3daf5; }
.date { width: 49px; margin-left: 5px; }
.pct { width: 32px; }
.zoom { display: flex; align-items: center; gap: 3px; width: 110px; font-size: 11px; }
.zoom input { width: 74px; height: 12px; appearance: none; background: linear-gradient(#3a4656, #3a4656) center / 100% 1px no-repeat; }
.zoom input::-webkit-slider-thumb { appearance: none; width: 2px; height: 8px; background: #222; }
```

FILE: script.js
```js
const WEEK = 23.56;
const FIRST_TICK = 16.4;
const ROW_COUNT = 22;
const HEADER = 45;

// Fill the sheet with the empty lines below the first task.
const rows = document.getElementById("rows");
const lineYs = [HEADER + 24, HEADER + 44];
for (let i = 1; i <= ROW_COUNT; i++) {
  const short = i % 6 === 0;
  const tr = document.createElement("tr");
  if (short) tr.className = "short";
  tr.innerHTML = "<td></td>".repeat(6);
  rows.append(tr);
  lineYs.push(lineYs[lineYs.length - 1] + (short ? 19 : 20));
}
const rest = document.createElement("tr");
rest.innerHTML = "<td></td>".repeat(6);
rows.append(rest);

// Bar chart.
const svg = document.getElementById("gantt");
const parts = [];
const rect = (x, y, w, h, fill, extra = "") =>
  parts.push(`<rect x="${x}" y="${y}" width="${w}" height="${h}" fill="${fill}" ${extra}/>`);
const line = (x1, y1, x2, y2, stroke, extra = "") =>
  parts.push(`<line x1="${x1}" y1="${y1}" x2="${x2}" y2="${y2}" stroke="${stroke}" shape-rendering="crispEdges" ${extra}/>`);
const text = (x, y, s, anchor = "middle") =>
  parts.push(`<text x="${x}" y="${y}" text-anchor="${anchor}">${s}</text>`);

rect(0, HEADER, "100%", "100%", "#fff");
rect(0, HEADER, 72, "100%", "url(#dots)");
rect(316, HEADER, "100%", "100%", "url(#dots)");

text("50%", 10, "2022");
[11, 21, 32].forEach(y => line(0, y, "100%", y, "#333"));
line(0, 44.5, "100%", 44.5, "#8d958d");

const months = [["April", 32], ["May", 115], ["June", 219], ["July", 320], ["August", 424], ["September", 530], ["October", 631], ["November", 719]];
months.forEach(([name, x]) => text(x, 20, name));
[64, 167, 271, 370, 479, 582, 681].forEach(x => line(x, 16, x, 21, "#e02020"));

const dates = [18, 25, 2, 9, 16, 23, 30, 6, 13, 20, 27, 4, 11, 18, 25, 1, 8, 15, 22, 29, 5, 12, 19, 26, 3, 10, 17, 24, 31, 7, 14, 21];
let week = -9;
text(4, 41, week);
dates.forEach((d, i) => {
  const x = Math.round(FIRST_TICK + i * WEEK);
  week = week === -1 ? 1 : week + 1;
  line(x, 26, x, 31, "#e02020");
  line(x, 37, x, 42, "#e02020");
  text(x + 1, 31, d, "start");
  text(x + 12, 41, week);
});

for (let i = 3; i <= 12; i++) {
  const x = Math.round(FIRST_TICK + i * WEEK);
  line(x, HEADER, x, "100%", i === 8 ? "#777" : "#8a8a8a", i === 8 ? 'stroke-width="2"' : "");
}
lineYs.forEach(y => line(0, y - 0.5, "100%", y - 0.5, "#8f8f8f"));
[167, 271].forEach(x => line(x, HEADER, x, "100%", "#2020d0", 'stroke-dasharray="11 5 3 5"'));

rect(172, HEADER, 9, 43, "url(#hatch-blue)", 'stroke="#2a2ac0"');
text(67, 83, "1");
const bars = [[73, 33, "#f00"], [120, 33, "#8080ff"], [168, 37, "url(#hatch-orange)"], [224, 28, "#c83232"], [271, 43, "#8e8ebc"]];
bars.forEach(([x, w, fill]) => {
  rect(x + 1, 74, w, 11, "#000");
  rect(x, 73, w, 11, fill, 'stroke="#000"');
});
rect(172, 70, 9, 6, "url(#hatch-blue)");
rect(172, 82, 9, 6, "url(#hatch-blue)");
line(172, 76, 182, 76, "#000");
line(172, 82, 182, 82, "#000");
svg.innerHTML = parts.join("");
```
